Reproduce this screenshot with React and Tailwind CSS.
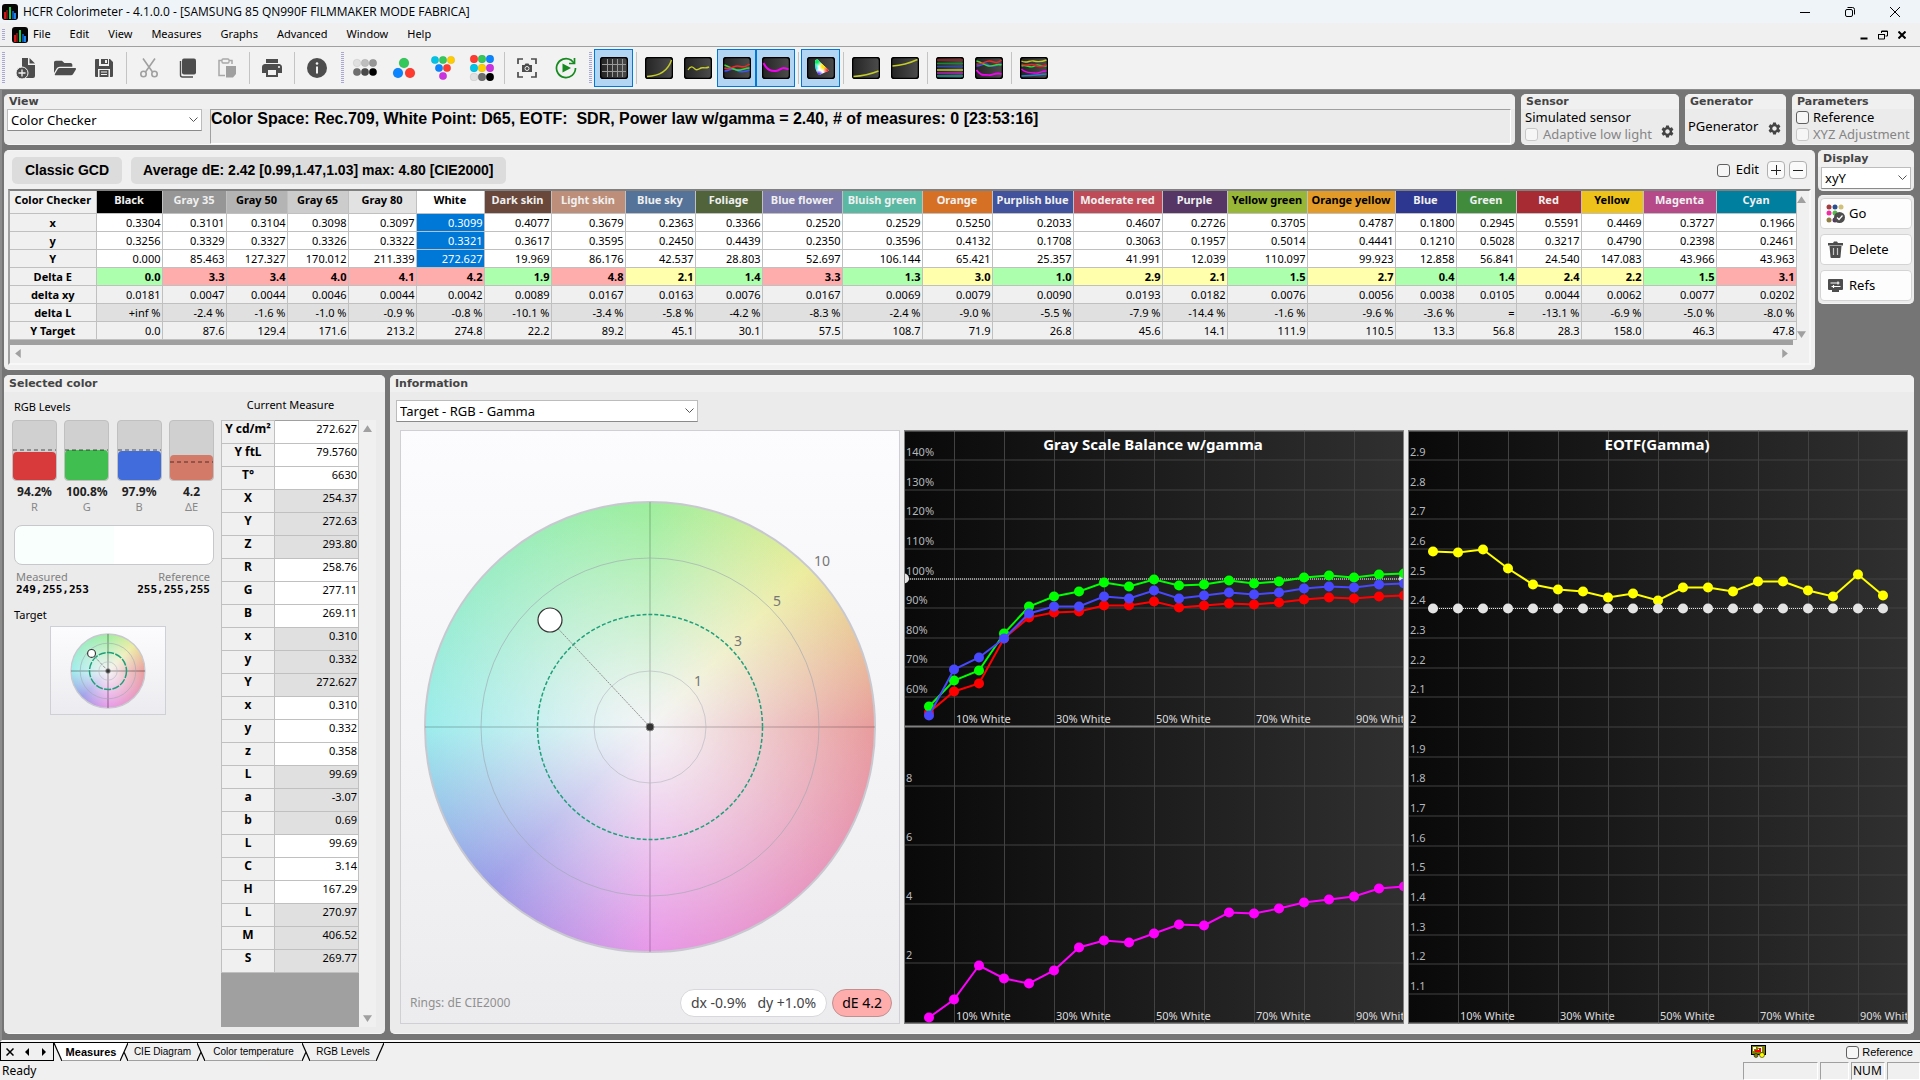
import React from 'react'
import { FaFolderOpen } from 'react-icons/fa'
import { MdPrint, MdSettings } from 'react-icons/md'

const UI = "font-['Noto_Sans','Open_Sans',sans-serif]"

const MENUS = ['File', 'Edit', 'View', 'Measures', 'Graphs', 'Advanced', 'Window', 'Help']

// name, header colour, light text?, column width, x, y, Y, dE, dxy, dL, Y target
const PATCHES = [
  ['Black', '#000000', true, 66, '0.3304', '0.3256', '0.000', '0.0', '0.0181', '+inf %', '0.0'],
  ['Gray 35', '#969696', true, 64, '0.3101', '0.3329', '85.463', '3.3', '0.0047', '-2.4 %', '87.6'],
  ['Gray 50', '#b4b4b4', false, 61, '0.3104', '0.3327', '127.327', '3.4', '0.0044', '-1.6 %', '129.4'],
  ['Gray 65', '#cccccc', false, 61, '0.3098', '0.3326', '170.012', '4.0', '0.0046', '-1.0 %', '171.6'],
  ['Gray 80', '#e2e2e2', false, 68, '0.3097', '0.3322', '211.339', '4.1', '0.0044', '-0.9 %', '213.2'],
  ['White', '#ffffff', false, 68, '0.3099', '0.3321', '272.627', '4.2', '0.0042', '-0.8 %', '274.8'],
  ['Dark skin', '#69473a', true, 67, '0.4077', '0.3617', '19.969', '1.9', '0.0089', '-10.1 %', '22.2'],
  ['Light skin', '#bd8e79', true, 74, '0.3679', '0.3595', '86.176', '4.8', '0.0167', '-3.4 %', '89.2'],
  ['Blue sky', '#557399', true, 70, '0.2363', '0.2450', '42.537', '2.1', '0.0163', '-5.8 %', '45.1'],
  ['Foliage', '#51633a', true, 67, '0.3366', '0.4439', '28.803', '1.4', '0.0076', '-4.2 %', '30.1'],
  ['Blue flower', '#7b79a8', true, 80, '0.2520', '0.2350', '52.697', '3.3', '0.0167', '-8.3 %', '57.5'],
  ['Bluish green', '#5bb8a2', true, 80, '0.2529', '0.3596', '106.144', '1.3', '0.0069', '-2.4 %', '108.7'],
  ['Orange', '#d67024', true, 70, '0.5250', '0.4132', '65.421', '3.0', '0.0079', '-9.0 %', '71.9'],
  ['Purplish blue', '#42529d', true, 81, '0.2033', '0.1708', '25.357', '1.0', '0.0090', '-5.5 %', '26.8'],
  ['Moderate red', '#bd4c58', true, 89, '0.4607', '0.3063', '41.991', '2.9', '0.0193', '-7.9 %', '45.6'],
  ['Purple', '#553664', true, 65, '0.2726', '0.1957', '12.039', '2.1', '0.0182', '-14.4 %', '14.1'],
  ['Yellow green', '#98b637', false, 80, '0.3705', '0.5014', '110.097', '1.5', '0.0076', '-1.6 %', '111.9'],
  ['Orange yellow', '#e29b28', false, 88, '0.4787', '0.4441', '99.923', '2.7', '0.0056', '-9.6 %', '110.5'],
  ['Blue', '#2d378f', true, 61, '0.1800', '0.1210', '12.858', '0.4', '0.0038', '-3.6 %', '13.3'],
  ['Green', '#418b3d', true, 60, '0.2945', '0.5028', '56.841', '1.4', '0.0105', '=', '56.8'],
  ['Red', '#a72b32', true, 65, '0.5591', '0.3217', '24.540', '2.4', '0.0044', '-13.1 %', '28.3'],
  ['Yellow', '#edc31b', false, 62, '0.4469', '0.4790', '147.083', '2.2', '0.0062', '-6.9 %', '158.0'],
  ['Magenta', '#b64a89', true, 73, '0.3727', '0.2398', '43.966', '1.5', '0.0077', '-5.0 %', '46.3'],
  ['Cyan', '#007f9f', true, 80, '0.1966', '0.2461', '43.963', '3.1', '0.0202', '-8.0 %', '47.8'],
]

const ROWS = ['x', 'y', 'Y', 'Delta E', 'delta xy', 'delta L', 'Y Target']
const SELECTED = 'White'

const MEASURE = [
  ['Y cd/m²', '272.627', 0], ['Y ftL', '79.5760', 0], ['T°', '6630', 0],
  ['X', '254.37', 1], ['Y', '272.63', 1], ['Z', '293.80', 1],
  ['R', '258.76', 0], ['G', '277.11', 0], ['B', '269.11', 0],
  ['x', '0.310', 1], ['y', '0.332', 1], ['Y', '272.627', 1],
  ['x', '0.310', 0], ['y', '0.332', 0], ['z', '0.358', 0],
  ['L', '99.69', 1], ['a', '-3.07', 1], ['b', '0.69', 1],
  ['L', '99.69', 0], ['C', '3.14', 0], ['H', '167.29', 0],
  ['L', '270.97', 1], ['M', '406.52', 1], ['S', '269.77', 1],
]

const GREEN = [276, 250, 240, 203, 176, 166, 161, 152, 156, 149, 155, 154, 150, 153, 151, 147, 145, 147, 144, 143]
const BLUE = [285, 239, 227, 208, 183, 176, 176, 166, 168, 160, 168, 165, 162, 164, 162, 158, 156, 157, 154, 153]
const RED = [282, 261, 253, 208, 187, 182, 181, 175, 175, 171, 177, 175, 173, 174, 172, 169, 167, 168, 166, 165]
const DELTA = [587, 569, 535, 548, 553, 540, 517, 510, 512, 503, 494, 495, 482, 483, 478, 472, 469, 466, 458, 456]
const GAMMA = [121, 122, 119, 138, 154, 159, 161, 167, 163, 170, 157, 157, 161, 151, 151, 160, 166, 144, 165]
const GAMMA_REF = GAMMA.map(() => 178)

/* ---------- icons ---------- */

function AppIcon() {
  return (
    <svg viewBox="0 0 16 16" className="h-4 w-4 shrink-0">
      <rect width="16" height="16" rx="3" fill="#060606" />
      <rect x="2" y="8" width="2" height="7" fill="#d01818" />
      <rect x="4" y="6" width="2" height="9" fill="#7a1010" />
      <rect x="7" y="3" width="2" height="12" fill="#17d44c" />
      <rect x="10" y="7" width="2" height="8" fill="#0c4fa8" />
      <rect x="12" y="9" width="2" height="6" fill="#1a84e8" />
    </svg>
  )
}

function NewIcon() {
  return (
    <svg viewBox="0 0 24 24" className="h-6 w-6">
      <path d="M8 2h6v7h7v11a2 2 0 0 1-2 2H8V2z" fill="#4d4d4d" />
      <path d="M15.500 2l5.500 5.500h-5.500z" fill="#4d4d4d" />
      <circle cx="8" cy="17" r="6" fill="#4d4d4d" stroke="#f2f2f2" strokeWidth="1" />
      <path d="M8 13.500v7M4.500 17h7" stroke="#f2f2f2" strokeWidth="1.300" />
    </svg>
  )
}

function SaveIcon() {
  return (
    <svg viewBox="0 0 20 20" className="h-5 w-5">
      <path d="M2 1h3v7h10V1h1l3 3v14a1 1 0 0 1-1 1h-2v-8H4v8H2a1 1 0 0 1-1-1V2a1 1 0 0 1 1-1z" fill="#4d4d4d" />
      <path d="M7 1h7v5H7zM5.500 12h9v7h-9z" fill="#4d4d4d" />
      <path d="M11 2h2v3h-2z" fill="#f2f2f2" />
      <path d="M7 14h6M7 16.500h6" stroke="#f2f2f2" />
    </svg>
  )
}

function CutIcon() {
  return (
    <svg viewBox="0 0 20 20" className="h-5 w-5" fill="none" stroke="#a0a0a0" strokeWidth="1.600">
      <path d="M4 0.500 L13.500 14M16 0.500 L6.500 14" />
      <circle cx="4.500" cy="16" r="2.700" />
      <circle cx="15.500" cy="16" r="2.700" />
    </svg>
  )
}

function CopyIcon() {
  return (
    <svg viewBox="0 0 20 20" className="h-5 w-5">
      <rect x="4" y="0.500" width="14" height="16" rx="2" fill="#4d4d4d" />
      <path d="M2.500 3v14a2 2 0 0 0 2 2H15" fill="none" stroke="#4d4d4d" strokeWidth="1.400" />
    </svg>
  )
}

function PasteIcon() {
  return (
    <svg viewBox="0 0 20 20" className="h-5 w-5">
      <path d="M8 17.500H2V2.500h3M12 2.500h3V6" fill="none" stroke="#a8a8a8" strokeWidth="1.500" />
      <rect x="5" y="1" width="7" height="4" rx="1" fill="none" stroke="#a8a8a8" strokeWidth="1.300" />
      <path d="M9 8h10v8l-3 3.500H9z" fill="#a0a0a0" />
    </svg>
  )
}

function InfoIcon() {
  return (
    <svg viewBox="0 0 20 20" className="h-5 w-5">
      <circle cx="10" cy="10" r="10" fill="#4d4d4d" />
      <circle cx="10" cy="5.500" r="1.300" fill="#f2f2f2" />
      <path d="M10 8.500v7" stroke="#f2f2f2" strokeWidth="2" />
    </svg>
  )
}

function Dots({ dots, r }) {
  return (
    <svg viewBox="0 0 26 26" className="h-[26px] w-[26px]">
      {dots.map(([x, y, c]) => <circle key={`${x}-${y}`} cx={x} cy={y} r={r} fill={c} stroke="#00000022" strokeWidth="0.500" />)}
    </svg>
  )
}

const GRAY_DOTS = [[5, 8, '#e0e0e0'], [13, 8, '#bdbdbd'], [21, 8, '#969696'], [5, 17, '#6e6e6e'], [13, 17, '#484848'], [21, 17, '#000']]
const RGB_DOTS = [[13, 8, '#34c759'], [7, 18, '#0a84ff'], [19, 18, '#ff3b30']]
const TRI_DOTS = [[5, 5, '#00c3e6'], [13, 5, '#34c759'], [21, 5, '#ffcc00'], [9, 13, '#0a84ff'], [17, 13, '#ff3b30'], [13, 21, '#cc33e0']]
const NINE_DOTS = [[5, 4, '#ff3b30'], [13, 4, '#34c759'], [21, 4, '#0a84ff'], [5, 13, '#00c3e6'], [13, 13, '#ffcc00'], [21, 13, '#cc33e0'], [5, 22, '#e0e0e0'], [13, 22, '#6e6e6e'], [21, 22, '#000']]

function CameraIcon() {
  return (
    <svg viewBox="0 0 20 20" className="h-5 w-5">
      <path d="M1 6V1h5M14 1h5v5M19 14v5h-5M6 19H1v-5" fill="none" stroke="#4d4d4d" strokeWidth="1.700" />
      <path d="M5 7h2.500l1-1.500h3l1 1.500H15v7H5z" fill="#4d4d4d" />
      <circle cx="10" cy="10.500" r="2" fill="#4d4d4d" stroke="#f2f2f2" />
    </svg>
  )
}

function RunIcon() {
  return (
    <svg viewBox="0 0 22 22" className="h-[22px] w-[22px]">
      <path d="M20.500 11A9.500 9.500 0 1 1 16 3l3 3" fill="none" stroke="#168a1f" strokeWidth="1.700" />
      <path d="M19.500 1v5.500H14" fill="none" stroke="#168a1f" strokeWidth="1.700" />
      <path d="M7.500 6.500v9L16 11z" fill="#168a1f" />
    </svg>
  )
}

// the little black monitor used for every graph toggle
function Screen({ children }) {
  return (
    <svg viewBox="0 0 28 22" className="h-[22px] w-7" fill="none" strokeWidth="1.400">
      <defs>
        <linearGradient id="screen">
          <stop offset="0" stopColor="#242424" />
          <stop offset="1" stopColor="#4c4c4c" />
        </linearGradient>
      </defs>
      <rect x="0.500" y="0.500" width="27" height="21" rx="3" fill="url(#screen)" stroke="#000" strokeWidth="1.600" />
      {children}
    </svg>
  )
}

const SCREENS = {
  grid: <path d="M2 7.500h24M2 14.500h24M7.500 2v18M12.500 2v18M17.500 2v18M22.500 2v18" stroke="#9a9a9a" strokeWidth="1" />,
  gamma: <path d="M2 19.500C14 19 23 14 26.500 3" stroke="#c3cc28" />,
  wave: <path d="M4 13c3-5 5-3 7-1s4 0 6-1 4 1 8-1" stroke="#c3cc28" />,
  rgb: (
    <>
      <path d="M1.500 14c5 0 8-4 12-1s8 2 13 0" stroke="#3a56ff" strokeWidth="1.600" />
      <path d="M1.500 8c5 2 8 4 12 5s8-2 13-2" stroke="#38d838" strokeWidth="1.600" />
      <path d="M1.500 11c5 2 9-2 13-2s6 3 12-2" stroke="#f02828" strokeWidth="1.600" />
    </>
  ),
  delta: <path d="M1.500 6c4 8 8 8 12 8s5-3 8-3 3 1 5 1" stroke="#f400f4" strokeWidth="2" />,
  low: <path d="M1.500 19.500C10 19 19 17 26.500 14" stroke="#c3cc28" />,
  high: <path d="M1.500 9C10 8.500 19 6 26.500 2.500" stroke="#c3cc28" />,
  bars: (
    <>
      <path d="M1 3h26" stroke="#a02020" strokeWidth="1.500" />
      <path d="M1 6.500h26" stroke="#108c28" strokeWidth="1.500" />
      <path d="M1 9.500h26" stroke="#2848b8" strokeWidth="1.500" />
      <path d="M1 13h26" stroke="#c3cc28" strokeWidth="1.500" />
      <path d="M1 16h26" stroke="#b020b0" strokeWidth="1.500" />
      <path d="M1 19h26" stroke="#189898" strokeWidth="1.500" />
    </>
  ),
  mix: (
    <>
      <path d="M1.500 9c5 0 8-4 12-1s8 0 13-1" stroke="#3a56ff" />
      <path d="M1.500 4c5 1 8 4 12 5s8-3 13-1" stroke="#38d838" />
      <path d="M1.500 7c5 1 9-3 13-3s6 4 12-1" stroke="#f02828" />
      <path d="M1.500 13c5 7 8 4 12 5s6-3 13-1" stroke="#f400f4" strokeWidth="1.800" />
    </>
  ),
  all: (
    <>
      <path d="M1.500 4c5 3 8-1 12 0s8 1 13-1" stroke="#c3cc28" />
      <path d="M1.500 9c5-2 9 3 13 0s6 1 12 0" stroke="#38d838" />
      <path d="M1.500 7c5 3 9-1 13 1s6 2 12 0" stroke="#e02828" />
      <path d="M1.500 12c5 5 9 3 13 4s6-2 12-2" stroke="#f400f4" />
      <path d="M1.500 19c8 0 16-1 25-2" stroke="#2a80c8" />
    </>
  ),
}

function CieGlow({ id, color }) {
  return (
    <radialGradient id={id}>
      <stop offset="0" stopColor={color} />
      <stop offset="0.400" stopColor={color} />
      <stop offset="1" stopColor={color} stopOpacity="0" />
    </radialGradient>
  )
}

function CieScreen() {
  return (
    <Screen>
      <defs>
        <clipPath id="cie-shape"><path d="M8 5c0-3 3-3 4-1l10 9.500-9.500 4.500C9 16 8 10 8 5z" /></clipPath>
        <CieGlow id="cie-g" color="#00f060" />
        <CieGlow id="cie-c" color="#00e8e8" />
        <CieGlow id="cie-y" color="#ffe800" />
        <CieGlow id="cie-r" color="#ff2020" />
        <CieGlow id="cie-b" color="#5030ff" />
      </defs>
      <g clipPath="url(#cie-shape)">
        <rect width="28" height="22" fill="#fff" />
        <circle cx="17" cy="9" r="5" fill="url(#cie-y)" />
        <circle cx="9" cy="3" r="7" fill="url(#cie-g)" />
        <circle cx="7" cy="11" r="5" fill="url(#cie-c)" />
        <circle cx="23" cy="14" r="7" fill="url(#cie-r)" />
        <circle cx="11" cy="19" r="6" fill="url(#cie-b)" />
      </g>
    </Screen>
  )
}

function GoIcon() {
  const dots = [[3, 3, '#a33d3d'], [9, 3, '#2c4f8f'], [15, 3, '#cfc07a'], [3, 9, '#ee2fa4'], [9, 9, '#54b948'], [3, 16, '#8f7f45'], [9, 16, '#553664']]
  return (
    <svg viewBox="0 0 19 19" className="h-[19px] w-[19px]">
      {dots.map(([x, y, c]) => <circle key={`${x}${y}`} cx={x} cy={y} r="2.500" fill={c} />)}
      <circle cx="13.500" cy="13.500" r="5.500" fill="#4d4d4d" />
      <path d="M11 13.500l2 2 3.500-4" fill="none" stroke="#fff" strokeWidth="1.200" />
    </svg>
  )
}

function TrashIcon() {
  return (
    <svg viewBox="0 0 19 19" className="h-[19px] w-[19px]">
      <path d="M2 3h5l1-1.500h3L12 3h5v2.500H2z" fill="#4d4d4d" />
      <path d="M3.500 6h12l-1 11a1 1 0 0 1-1 1h-8a1 1 0 0 1-1-1z" fill="#4d4d4d" />
      <path d="M7.500 8v7M11.500 8v7" stroke="#c8c8c8" strokeWidth="1.200" />
    </svg>
  )
}

function RefsIcon() {
  return (
    <svg viewBox="0 0 19 19" className="h-[19px] w-[19px]">
      <rect x="2" y="3" width="15" height="11" rx="1" fill="#4d4d4d" />
      <path d="M6 14h7v2H6z" fill="#4d4d4d" />
      <path d="M4.500 7h9M12 5.500v3M5.500 10.500h9M7.500 9v3" stroke="#fff" strokeWidth="1.200" />
    </svg>
  )
}

/* ---------- small pieces ---------- */

function Grip({ tall }) {
  return (
    <span
      className={`w-[3px] shrink-0 bg-[repeating-linear-gradient(to_bottom,#a9a9cf_0px,#a9a9cf_1px,#f2f2f2_1px,#f2f2f2_2px)] ${tall ? 'h-[32px]' : 'h-3'}`}
    />
  )
}

function Sep() {
  return (
    <span className="flex w-[6px] shrink-0 justify-center">
      <span className="h-8 w-px bg-[#c4c4c4]" />
    </span>
  )
}

function ToolButton({ label, active, children }) {
  return (
    <button
      aria-label={label}
      className={`flex h-[38px] w-[39px] shrink-0 items-center justify-center border ${
        active ? 'border-[#0078d7] bg-[#b1d5f2]' : 'border-transparent'
      }`}
    >
      {children}
    </button>
  )
}

function Panel({ title, tall, className, children }) {
  return (
    <section className={`flex flex-col overflow-hidden rounded-[5px] border-y border-[#f4f4f4] bg-[#ebebeb] ${className}`}>
      {title && (
        <h2
          className={`bg-[#f0f0f0] pl-[5px] font-['DejaVu_Sans',sans-serif] text-[11px] font-bold text-[#444] ${
            tall ? 'h-4 leading-4' : 'h-[14px] leading-[14px]'
          }`}
        >
          {title}
        </h2>
      )}
      {children}
    </section>
  )
}

function Select({ label, value, options, className }) {
  return (
    <div className={`relative ${className}`}>
      <select
        aria-label={label}
        defaultValue={value}
        className="block h-[22px] w-full appearance-none rounded-none border border-[#bcbcbc] border-b-[#8a8a8a] bg-white pl-[3px] text-[13px] leading-5 text-black"
      >
        {options.map((o) => <option key={o}>{o}</option>)}
      </select>
      <svg viewBox="0 0 9 6" className="pointer-events-none absolute top-2 right-1 h-[6px] w-[9px]">
        <path d="M0.500 0.500l4 4 4-4" fill="none" stroke="#555" />
      </svg>
    </div>
  )
}

function Check({ id, label, disabled, gap }) {
  return (
    <div className={`flex items-center ${gap || 'gap-1'}`}>
      <input
        id={id}
        type="checkbox"
        disabled={disabled}
        className="h-[13px] w-[13px] shrink-0 appearance-none rounded-[3px] border border-[#606060] bg-[#f6f6f6] disabled:border-[#c8c8c8]"
      />
      <label htmlFor={id} className={`whitespace-nowrap ${disabled ? 'text-[#858585]' : 'text-black'}`}>{label}</label>
    </div>
  )
}

function Arrow({ dir }) {
  const d = { up: 'M4 1l4 6H0z', down: 'M0 1h8L4 7z', left: 'M1 4l5-4v8z', right: 'M7 4L2 0v8z' }[dir]
  return <svg viewBox="0 0 8 8" className="h-[9px] w-[9px]"><path d={d} fill="#a0a0a0" /></svg>
}

/* ---------- colour target ---------- */

function Target({ small }) {
  const thin = small ? 6 : 1
  return (
    <div
      className={`aspect-square shrink-0 rounded-full bg-[radial-gradient(circle_closest-side,#f4f4f6_0%,#f4f4f6e0_15%,#f4f4f600_100%),conic-gradient(#9cee9c_0deg,#ecec9c_45deg,#e89c9c_90deg,#e898c0_135deg,#e898e8_180deg,#9c9ce8_225deg,#9cecec_270deg,#9cedc4_315deg,#9cee9c_360deg)] ${
        small ? 'w-[74px]' : 'w-[450px]'
      }`}
    >
      <svg viewBox="0 0 450 450" className="h-full w-full overflow-visible" fill="none">
        <circle cx="225" cy="225" r="225" stroke="#c8c8d0" strokeWidth={small ? 8 : 2} />
        <path d="M0 225h450M225 0v450" stroke="#00000040" strokeWidth={small ? 10 : 1} />
        <circle cx="225" cy="225" r="56" stroke="#b4b8c0a0" strokeWidth={thin} />
        <circle cx="225" cy="225" r="169" stroke="#a0a8b0a0" strokeWidth={thin} />
        <circle
          cx="225" cy="225" r="112.500" stroke="#1fa07a"
          strokeWidth={small ? 9 : 1.500} strokeDasharray={small ? '44 8' : '4 2'}
        />
        <path d="M225 225L125 118" stroke="#909090" strokeWidth={thin} strokeDasharray={small ? '18 8' : '2 1'} />
        <circle cx="225" cy="225" r={small ? 14 : 4} fill="#333" stroke="#8a8a8a" strokeWidth={thin} />
        <circle cx="125" cy="118" r={small ? 24 : 12} fill="#fff" stroke="#333" strokeWidth={small ? 7 : 1.200} />
        {!small && (
          <g className="font-['Noto_Sans',sans-serif] text-[14px]" fill="#777" textAnchor="middle">
            <text x="273" y="184">1</text>
            <text x="313" y="144">3</text>
            <text x="352" y="104">5</text>
            <text x="397" y="64">10</text>
          </g>
        )}
      </svg>
    </div>
  )
}

/* ---------- graphs ---------- */

function Series({ ys, color, dotted }) {
  return (
    <g>
      <polyline
        points={ys.map((y, i) => `${25 + i * 25},${y}`).join(' ')}
        fill="none" stroke={color} strokeWidth={dotted ? 1 : 2} strokeDasharray={dotted ? '1 1' : undefined}
      />
      {ys.map((y, i) => <circle key={i} cx={25 + i * 25} cy={y} r="5" fill={color} />)}
    </g>
  )
}

function Graph({ title, grid, xLabelsAt, children }) {
  const cols = [1, 2, 3, 4, 5, 6, 7, 8, 9]
  return (
    <svg viewBox="0 0 500 593" className="h-full min-w-0 flex-1 font-['Noto_Sans',sans-serif] text-[11px]" role="img" aria-label={title}>
      <defs>
        <linearGradient id="plot">
          <stop offset="0" stopColor="#090909" />
          <stop offset="1" stopColor="#303030" />
        </linearGradient>
      </defs>
      <rect width="500" height="593" fill="url(#plot)" />
      {cols.map((i) => <path key={i} d={`M${i * 50 + 0.5} 0V593`} stroke="#424242" />)}
      {grid.map(([y, text]) => (
        <g key={y}>
          <path d={`M0 ${y + 0.5}H500`} stroke="#424242" />
          <text x="2" y={y - 4} fill="#b4b8bc">{text}</text>
        </g>
      ))}
      {xLabelsAt.map((y) => [1, 3, 5, 7, 9].map((i) => (
        <text key={`${y}${i}`} x={i * 50 + 2} y={y} fill="#dcdcdc">{`${i}0% White`}</text>
      )))}
      {children}
      <text x="249" y="19" fill="#fff" textAnchor="middle" className="text-[15px] font-bold">{title}</text>
      <rect x="0.500" y="0.500" width="499" height="592" fill="none" stroke="#808080" />
    </svg>
  )
}

const BALANCE_GRID = [
  [29, '140%'], [59, '130%'], [88, '120%'], [118, '110%'], [148, '100%'], [177, '90%'], [207, '80%'], [236, '70%'], [266, '60%'],
  [355, '8'], [414, '6'], [473, '4'], [532, '2'],
]
const GAMMA_GRID = Array.from({ length: 19 }, (_, i) => [Math.round(29 + i * 29.67), String((29 - i) / 10)])

/* ---------- page sections ---------- */

function TitleBar() {
  return (
    <header>
      <div className="flex h-[23px] items-center bg-[#eff4f9] pl-[2px]">
        <AppIcon />
        <h1 className="ml-[5px] font-['Open_Sans',sans-serif] text-[12px] text-black">HCFR Colorimeter - 4.1.0.0 - [SAMSUNG 85 QN990F FILMMAKER MODE FABRICA]</h1>
        <div className="ml-auto flex gap-[35px] pr-5">
          <button aria-label="Minimize"><svg viewBox="0 0 10 10" className="h-[10px] w-[10px]"><path d="M0 5.500h10" stroke="#000" /></svg></button>
          <button aria-label="Restore">
            <svg viewBox="0 0 10 10" className="h-[10px] w-[10px]" fill="none" stroke="#000">
              <rect x="0.500" y="2.500" width="7" height="7" rx="1.500" />
              <path d="M2.500 0.500h5a2 2 0 0 1 2 2v5" />
            </svg>
          </button>
          <button aria-label="Close"><svg viewBox="0 0 10 10" className="h-[10px] w-[10px]"><path d="M0 0l10 10M10 0L0 10" stroke="#000" /></svg></button>
        </div>
      </div>
      <nav className="flex h-6 items-center border-b border-[#a0a0a0] bg-[#f0f0f0] pl-[2px]">
        <Grip />
        <span className="ml-[7px]"><AppIcon /></span>
        <div className="ml-[5px] flex gap-[19px] text-[11px]">
          {MENUS.map((m) => <button key={m}>{m}</button>)}
        </div>
        <div className="ml-auto flex items-center gap-[10px] pr-[14px]">
          <button aria-label="Minimize document"><svg viewBox="0 0 8 10" className="h-[10px] w-2"><path d="M0.500 8.500h7" stroke="#000" strokeWidth="2" /></svg></button>
          <button aria-label="Restore document">
            <svg viewBox="0 0 10 10" className="h-[10px] w-[10px]" fill="none" stroke="#000">
              <path d="M3.500 3V1h6v5h-2M3 1.500h7M0 4.500h7" />
              <path d="M0.500 4v5h6V4" />
            </svg>
          </button>
          <button aria-label="Close document"><svg viewBox="0 0 8 8" className="h-2 w-2"><path d="M0.500 0.500l7 7M7.500 0.500l-7 7" stroke="#000" strokeWidth="2" /></svg></button>
        </div>
      </nav>
    </header>
  )
}

function Toolbar() {
  return (
    <div className="flex h-[43px] items-center border-b border-[#8c8c8c] bg-[#f2f2f2] pl-[2px]" role="toolbar">
      <Grip tall />
      <span className="w-px" />
      <ToolButton label="New"><NewIcon /></ToolButton>
      <ToolButton label="Open"><FaFolderOpen className="h-[22px] w-[22px] text-[#4d4d4d]" /></ToolButton>
      <ToolButton label="Save"><SaveIcon /></ToolButton>
      <Sep />
      <ToolButton label="Cut"><CutIcon /></ToolButton>
      <ToolButton label="Copy"><CopyIcon /></ToolButton>
      <ToolButton label="Paste"><PasteIcon /></ToolButton>
      <Sep />
      <ToolButton label="Print"><MdPrint className="h-6 w-6 text-[#4d4d4d]" /></ToolButton>
      <Sep />
      <ToolButton label="About"><InfoIcon /></ToolButton>
      <span className="w-[5px]" />
      <Grip tall />
      <span className="w-px" />
      <ToolButton label="Measure grays"><Dots dots={GRAY_DOTS} r="3.800" /></ToolButton>
      <ToolButton label="Measure primaries"><Dots dots={RGB_DOTS} r="5" /></ToolButton>
      <ToolButton label="Measure secondaries"><Dots dots={TRI_DOTS} r="3.800" /></ToolButton>
      <ToolButton label="Measure all"><Dots dots={NINE_DOTS} r="3.900" /></ToolButton>
      <Sep />
      <ToolButton label="Capture"><CameraIcon /></ToolButton>
      <ToolButton label="Continuous"><RunIcon /></ToolButton>
      <span className="w-[4px]" />
      <Grip tall />
      <span className="w-[2px]" />
      <ToolButton label="Measures grid" active><Screen>{SCREENS.grid}</Screen></ToolButton>
      <Sep />
      <ToolButton label="Luminance"><Screen>{SCREENS.gamma}</Screen></ToolButton>
      <ToolButton label="Gamma"><Screen>{SCREENS.wave}</Screen></ToolButton>
      <ToolButton label="RGB levels" active><Screen>{SCREENS.rgb}</Screen></ToolButton>
      <ToolButton label="Color temperature" active><Screen>{SCREENS.delta}</Screen></ToolButton>
      <Sep />
      <ToolButton label="CIE diagram" active><CieScreen /></ToolButton>
      <Sep />
      <ToolButton label="Near black"><Screen>{SCREENS.low}</Screen></ToolButton>
      <ToolButton label="Near white"><Screen>{SCREENS.high}</Screen></ToolButton>
      <Sep />
      <ToolButton label="Saturation luminance"><Screen>{SCREENS.bars}</Screen></ToolButton>
      <ToolButton label="Saturation shift"><Screen>{SCREENS.mix}</Screen></ToolButton>
      <Sep />
      <ToolButton label="Combined graphs"><Screen>{SCREENS.all}</Screen></ToolButton>
    </div>
  )
}

function TopPanels() {
  return (
    <div className="flex h-[51px] gap-[6px] pr-1">
      <Panel title="View" className="flex-1">
        <div className="flex flex-1 gap-2 pr-1 pl-[3px]">
          <Select label="View" value="Color Checker" options={['Color Checker', 'Gray scale', 'Primary & secondary']} className="w-[195px]" />
          <p className="flex-1 border border-[#fff] border-t-[#a0a0a0] border-l-[#a0a0a0] font-['Liberation_Sans',sans-serif] text-[16px] leading-[17px] font-bold whitespace-pre text-black">
            {'Color Space: Rec.709, White Point: D65, EOTF:  SDR, Power law w/gamma = 2.40, # of measures: 0 [23:53:16]'}
          </p>
        </div>
      </Panel>
      <Panel title="Sensor" className="w-[158px]">
        <div className="flex items-end justify-between pr-1 pl-1 text-[13px] leading-[17px]">
          <div>
            <div>Simulated sensor</div>
            <Check id="adaptive" label="Adaptive low light" disabled gap="gap-[5px]" />
          </div>
          <button aria-label="Sensor settings" className="mb-1"><MdSettings className="h-[15px] w-[15px] text-[#444]" /></button>
        </div>
      </Panel>
      <Panel title="Generator" className="w-[101px]">
        <div className="flex items-center justify-between pt-2 pr-1 pl-[3px] text-[13px] leading-[17px]">
          PGenerator
          <button aria-label="Generator settings" className="pt-1"><MdSettings className="h-[15px] w-[15px] text-[#444]" /></button>
        </div>
      </Panel>
      <Panel title="Parameters" className="w-[122px]">
        <div className="pl-1 text-[13px] leading-[17px]">
          <Check id="param-ref" label="Reference" />
          <Check id="param-xyz" label="XYZ Adjustment" disabled />
        </div>
      </Panel>
    </div>
  )
}

// Delta E background: under 2 good, up to 3 fair, above that bad
function deltaColor(v) {
  const n = parseFloat(v)
  if (n < 2) return 'bg-[#acffac]'
  return n <= 3 ? 'bg-[#ffffac]' : 'bg-[#ffacac]'
}

function cellColor(patch, row) {
  if (row === 3) return `${deltaColor(patch[7])} font-bold`
  if (row < 3) return patch[0] === SELECTED ? 'bg-[#0078d7] text-white' : 'bg-white'
  return row === 5 ? 'bg-[#e0e0e0]' : 'bg-[#f0f0f0]'
}

function PatchTable() {
  return (
    <div className="mx-1 flex border-2 border-[#f8f8f8] border-t-[#808080] border-l-[#a0a0a0] bg-[#f0f0f0]">
      <div className="min-w-0 flex-1">
        <table className="w-full table-fixed border-collapse text-[11px] leading-[17px]">
          <colgroup>
            <col style={{ width: 86 }} />
            {PATCHES.map((p) => <col key={p[0]} style={{ width: p[3] }} />)}
          </colgroup>
          <thead>
            <tr className="h-[22px]">
              <th className="border-r border-b border-[#c0c0c0] p-0 align-top text-[11px] whitespace-nowrap">Color Checker</th>
              {PATCHES.map((p) => (
                <th
                  key={p[0]}
                  style={{ backgroundColor: p[1] }}
                  className={`border-r border-b border-[#c0c0c0] p-0 align-top whitespace-nowrap ${p[2] ? 'text-[#f0f0f0]' : 'text-black'}`}
                >
                  {p[0]}
                </th>
              ))}
            </tr>
          </thead>
          <tbody>
            {ROWS.map((name, r) => (
              <tr key={name} className="h-[18px]">
                <th className="border-r border-b border-[#c0c0c0] p-0">{name}</th>
                {PATCHES.map((p) => (
                  <td key={p[0]} className={`border-r border-b border-[#c0c0c0] p-0 pr-px text-right whitespace-nowrap ${cellColor(p, r)}`}>
                    {p[4 + r]}
                  </td>
                ))}
              </tr>
            ))}
          </tbody>
        </table>
        <div className="h-[5px] bg-[#a0a0a0]" />
        <div className="flex h-[18px] items-center justify-between px-1"><Arrow dir="left" /><Arrow dir="right" /></div>
      </div>
      <div className="flex w-4 flex-col items-center justify-between pt-1 pb-6"><Arrow dir="up" /><Arrow dir="down" /></div>
    </div>
  )
}

function MiddleRow() {
  return (
    <div className="flex items-start gap-[3px] pr-1">
      <Panel className="h-[220px] min-w-0 flex-1 bg-[#f0f0f0]!">
        <div className="flex h-[38px] items-center gap-[9px] pr-2 pl-2 font-['Liberation_Sans',sans-serif] text-[14px] font-bold text-black">
          <span className="rounded-[5px] bg-[#dcdcdc] px-[13px] leading-[27px]">Classic GCD</span>
          <span className="rounded-[5px] bg-[#dcdcdc] px-3 leading-[27px]">Average dE: 2.42 [0.99,1.47,1.03] max: 4.80 [CIE2000]</span>
          <div className={`ml-auto flex items-center gap-1 text-[13px] font-normal ${UI}`}>
            <Check id="edit" label="Edit" gap="gap-[6px]" />
            <button aria-label="Add" className="ml-1 flex h-[18px] w-[18px] items-center justify-center rounded-[4px] border border-[#b0b0b0] bg-[#fafafa]">
              <svg viewBox="0 0 10 10" className="h-[10px] w-[10px]"><path d="M0 5.500h10M5.500 0v10" stroke="#222" /></svg>
            </button>
            <button aria-label="Remove" className="flex h-[18px] w-[18px] items-center justify-center rounded-[4px] border border-[#b0b0b0] bg-[#fafafa]">
              <svg viewBox="0 0 10 10" className="h-[10px] w-[10px]"><path d="M0 5.500h10" stroke="#222" /></svg>
            </button>
          </div>
        </div>
        <PatchTable />
      </Panel>
      <div className="flex w-24 flex-col gap-1">
        <Panel title="Display" tall className="h-[41px]">
          <Select label="Display" value="xyY" options={['xyY', 'XYZ', 'RGB']} className="mx-[3px]" />
        </Panel>
        <Panel className="gap-[5px] px-[2px] py-[2px] text-[13px]">
          <SideButton icon={<GoIcon />} text="Go" />
          <SideButton icon={<TrashIcon />} text="Delete" />
          <SideButton icon={<RefsIcon />} text="Refs" />
        </Panel>
      </div>
    </div>
  )
}

function SideButton({ icon, text }) {
  return (
    <button className="flex h-[31px] items-center gap-1 rounded-[4px] border border-[#d4d4d4] bg-[#fdfdfd] pl-[5px] text-black">
      {icon}
      {text}
    </button>
  )
}

// fill is the height of the bar, mark the distance of the dashes from the top
const METERS = [
  { name: 'R', value: '94.2%', fill: 28, mark: 28, bar: 'bg-[#d83a3c]' },
  { name: 'G', value: '100.8%', fill: 30, mark: 28, bar: 'bg-[#40bf50]' },
  { name: 'B', value: '97.9%', fill: 29, mark: 28, bar: 'bg-[#406cdc]' },
  { name: 'ΔE', value: '4.2', fill: 25, mark: 40, bar: 'bg-[#d47a68]' },
]

function Meter({ name, value, fill, mark, bar }) {
  return (
    <div className="flex w-[45px] flex-col items-center">
      <div className="relative flex h-[61px] w-full flex-col justify-end overflow-hidden rounded-[4px] border border-[#c0c0c0] bg-[#d0d0d0]">
        <div className={`rounded-[4px] ${bar}`} style={{ height: fill }} />
        <span className="absolute inset-x-0 h-[2px] bg-[repeating-linear-gradient(to_right,#00000050_0px,#00000050_4px,transparent_4px,transparent_7px)]" style={{ top: mark }} />
      </div>
      <span className="mt-[3px] text-[12px] leading-[16px] font-bold text-[#222]">{value}</span>
      <span className="text-[11px] leading-[13px] text-[#888]">{name}</span>
    </div>
  )
}

function SelectedColor() {
  return (
    <Panel title="Selected color" tall className="w-[381px] shrink-0">
      <div className="flex min-h-0 flex-1 pr-[9px] pl-2">
        <div className="flex w-[202px] flex-col pt-[7px]">
          <h3 className="pl-[2px] text-[11px] leading-4 text-black">RGB Levels</h3>
          <div className="mt-[5px] flex justify-between">
            {METERS.map((m) => <Meter key={m.name} {...m} />)}
          </div>
          <div className="mt-3 ml-[2px] h-10 rounded-[8px] border border-[#c8c8cc] bg-[linear-gradient(to_right,#f9fffd_50%,#ffffff_50%)]" />
          <dl className="mt-1 flex justify-between px-[4px]">
            <div>
              <dt className="text-[11px] leading-4 text-[#808080]">Measured</dt>
              <dd className="font-['DejaVu_Sans_Mono',monospace] text-[11px] leading-[10px] font-bold text-black">249,255,253</dd>
            </div>
            <div className="text-right">
              <dt className="text-[11px] leading-4 text-[#808080]">Reference</dt>
              <dd className="font-['DejaVu_Sans_Mono',monospace] text-[11px] leading-[10px] font-bold text-black">255,255,255</dd>
            </div>
          </dl>
          <h3 className="mt-3 pl-[2px] text-[11px] leading-4 text-black">Target</h3>
          <div className="mt-[3px] ml-[38px] flex h-[89px] w-[116px] items-center justify-center border border-[#cfcfd6] bg-linear-to-b from-[#fcfcfe] to-[#ececf0]">
            <Target small />
          </div>
        </div>
        <div className="ml-[7px] flex flex-1 flex-col pt-[5px] pb-[6px]">
          <h3 className="pr-4 text-center text-[11px] leading-4 text-black">Current Measure</h3>
          <div className="mt-[7px] flex flex-1">
            <div className="flex flex-1 flex-col bg-[#a0a0a0]">
              <table className="w-full border-collapse text-[11px] leading-4 text-black">
                <tbody>
                  {MEASURE.map(([k, v, shade], i) => (
                    <tr key={i} className="h-[23px]">
                      <th className="w-[53px] border border-[#c0c0c0] bg-[#f0f0f0] p-0 align-top text-[12px] whitespace-nowrap">{k}</th>
                      <td className={`border-r border-b border-[#c0c0c0] p-0 pr-px text-right align-top ${shade ? 'bg-[#e0e0e0]' : 'bg-white'}`}>{v}</td>
                    </tr>
                  ))}
                </tbody>
              </table>
            </div>
            <div className="flex w-[17px] flex-col items-center justify-between bg-[#f0f0f0] py-1"><Arrow dir="up" /><Arrow dir="down" /></div>
          </div>
        </div>
      </div>
    </Panel>
  )
}

function Information() {
  return (
    <Panel title="Information" tall className="min-w-0 flex-1">
      <Select
        label="Information view"
        value="Target - RGB - Gamma"
        options={['Target - RGB - Gamma', 'Target', 'RGB']}
        className="mt-2 ml-[6px] w-[302px]"
      />
      <div className="flex min-h-0 flex-1 gap-1 pt-[8px] pr-[6px] pb-[9px] pl-[10px]">
        <div className="relative flex min-w-0 flex-1 items-center justify-center bg-linear-to-b from-[#fcfcfe] to-[#ececee] ring-1 ring-[#cfcfd4] ring-inset">
          <Target />
          <div className="absolute inset-x-0 bottom-[7px] flex items-center gap-[5px] pr-2 pl-[10px] text-[14px]">
            <span className="mr-auto text-[12px] text-[#909090]">Rings: dE CIE2000</span>
            <span className="rounded-full border border-[#d8d8dc] bg-white px-[10px] leading-[26px] whitespace-pre text-[#444]">{'dx -0.9%   dy +1.0%'}</span>
            <span className="rounded-full border border-[#c09090] bg-[#ffacac] px-[9px] leading-[26px] text-black">dE 4.2</span>
          </div>
        </div>
        <Graph title="Gray Scale Balance w/gamma" grid={BALANCE_GRID} xLabelsAt={[292, 589]}>
          <path d="M0 148.500H500" stroke="#fff" strokeDasharray="1 1" />
          <circle cx="0" cy="148" r="5" fill="#e4e4e4" />
          <circle cx="500" cy="148" r="5" fill="#e4e4e4" />
          <Series ys={RED} color="#ff0000" />
          <Series ys={GREEN} color="#00ff00" />
          <Series ys={BLUE} color="#4848ff" />
          <path d="M0 296H500" stroke="#808080" strokeWidth="2" />
          <Series ys={DELTA} color="#ff00ff" />
        </Graph>
        <Graph title="EOTF(Gamma)" grid={GAMMA_GRID} xLabelsAt={[589]}>
          <Series ys={GAMMA} color="#ffff00" />
          <Series ys={GAMMA_REF} color="#e4e4e4" dotted />
        </Graph>
      </div>
    </Panel>
  )
}

function TabEdge({ d, fill }) {
  return (
    <svg viewBox="0 0 8 18" className="h-[18px] w-2 shrink-0">
      {fill && <path d={fill} fill="#fff" />}
      <path d={d} fill="none" stroke="#000" strokeWidth="1.200" />
    </svg>
  )
}

function BottomTabs() {
  const tab = 'border-b border-[#a0a0a0] text-center whitespace-nowrap'
  return (
    <div className="flex h-5 border-t border-black bg-[#f0f0f0] font-['Liberation_Sans',sans-serif] text-[10px] leading-[16px] text-black">
      <div className="flex h-[18px] w-[54px] items-center justify-around border-r border-b border-l border-black">
        <button aria-label="Close tab"><svg viewBox="0 0 8 8" className="h-2 w-2"><path d="M0.500 0.500l7 7M7.500 0.500l-7 7" stroke="#000" strokeWidth="1.500" /></svg></button>
        <button aria-label="Previous tab"><svg viewBox="0 0 8 8" className="h-2 w-2"><path d="M6 0v8L2 4z" /></svg></button>
        <button aria-label="Next tab"><svg viewBox="0 0 8 8" className="h-2 w-2"><path d="M2 0v8l4-4z" /></svg></button>
      </div>
      <TabEdge d="M0 0L8 18" fill="M0 0h8v18z" />
      <button className="h-[18px] w-[58px] border-b border-[#a0a0a0] bg-white text-center text-[11px] font-bold">Measures</button>
      <TabEdge d="M8 0L0 18M4 9L8 18" fill="M0 0h8L0 18z" />
      <button className={`h-[18px] w-[69px] ${tab}`}>CIE Diagram</button>
      <TabEdge d="M0 0L8 18M4 9L0 18" />
      <button className={`h-[18px] w-[97px] ${tab}`}>Color temperature</button>
      <TabEdge d="M0 0L8 18M4 9L0 18" />
      <button className={`h-[18px] w-[66px] ${tab}`}>RGB Levels</button>
      <TabEdge d="M8 0L0 18" />
      <div className="ml-auto flex items-start pt-[1px] pr-[7px] text-[11px]">
        <svg viewBox="0 0 15 13" className="mt-px mr-[80px] h-[13px] w-[15px]">
          <rect x="0.500" y="0.500" width="14" height="9" fill="#808000" stroke="#000" />
          <path d="M2 2h3v2H3v2H2zM6 2h5v5H7V4h3" fill="#fff" />
          <path d="M4 5h4V3h2v4H4z" fill="#f00" />
          <circle cx="5" cy="10.500" r="2" fill="#808000" stroke="#000" strokeWidth="0.500" />
          <circle cx="11" cy="10" r="2.500" fill="#ff0" stroke="#000" strokeWidth="0.500" />
        </svg>
        <Check id="status-ref" label="Reference" gap="gap-[3px]" />
      </div>
    </div>
  )
}

function StatusBar() {
  const cell = 'h-[18px] border border-[#a0a0a0] border-r-[#fff] border-b-[#fff]'
  return (
    <footer className="flex h-[18px] items-end gap-[2px] bg-[#f0f0f0] text-[12px] leading-[18px] text-black">
      <span className="mr-auto pl-[2px]">Ready</span>
      <span className={`w-[75px] ${cell}`} />
      <span className={`w-[29px] ${cell}`} />
      <span className={`w-[34px] pl-[1px] leading-[16px] ${cell}`}>NUM</span>
      <span className={`w-[33px] ${cell}`} />
    </footer>
  )
}

export default function App() {
  return (
    <div className={`flex min-h-screen flex-col bg-[#f0f0f0] text-black ${UI}`}>
      <TitleBar />
      <Toolbar />
      <main className="flex flex-1 flex-col gap-[5px] border-b-2 border-l-2 border-b-[#fafafa] border-l-[#8c8c8c] bg-[#757575] pt-1 pr-[2px] pb-[6px] pl-[2px]">
        <TopPanels />
        <MiddleRow />
        <div className="flex min-h-[650px] flex-1 gap-[5px] pr-1">
          <SelectedColor />
          <Information />
        </div>
      </main>
      <BottomTabs />
      <StatusBar />
    </div>
  )
}
